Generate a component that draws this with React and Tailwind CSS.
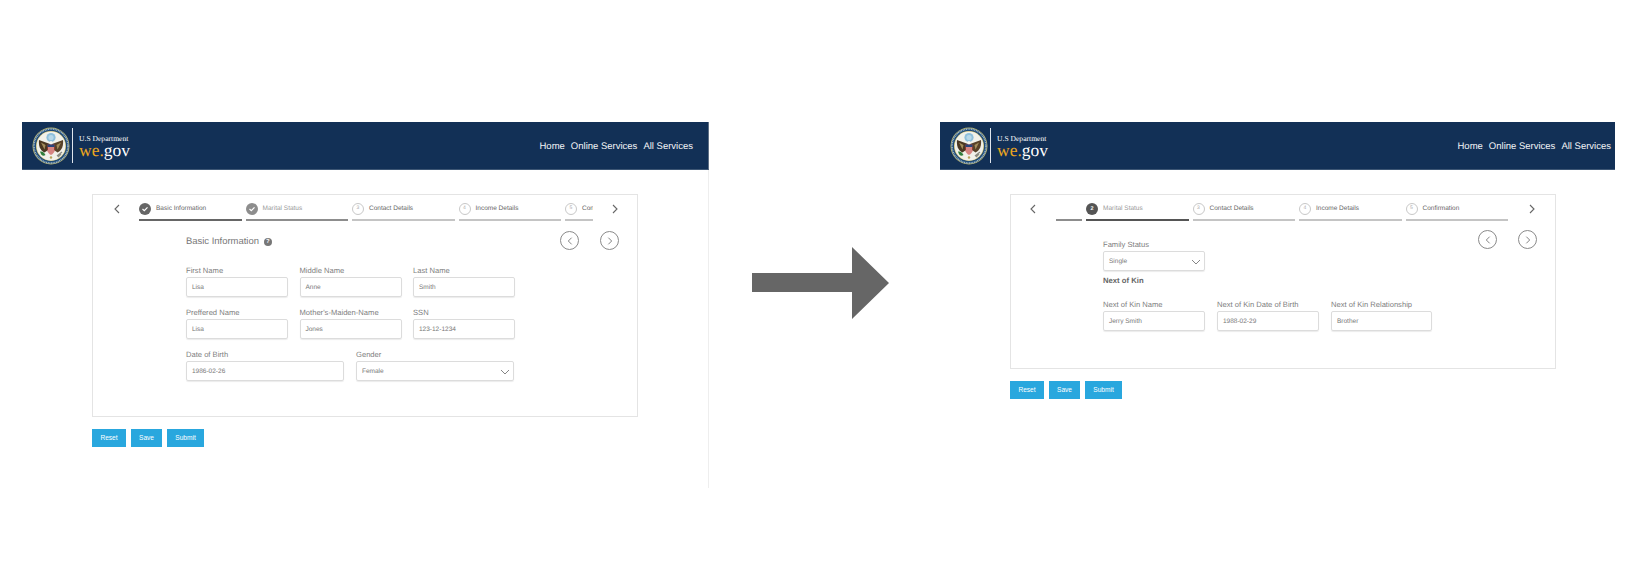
const SANS = "font-['Liberation_Sans',Arial,sans-serif]";

function Seal() {
  return (
    <svg width="38" height="38" viewBox="0 0 38 38" className="shrink-0">
      <circle cx="19" cy="19" r="18.5" fill="#b9b26a" />
      <circle cx="19" cy="19" r="17.6" fill="#1d4a78" />
      <circle cx="19" cy="19" r="17" fill="none" stroke="#9fb7c9" strokeWidth="1.6" strokeDasharray="1 0.7" />
      <circle cx="19" cy="19" r="15" fill="#d0bd68" />
      <circle cx="19" cy="19" r="14.4" fill="#f1f1ea" />
      <circle cx="19" cy="10.5" r="4.6" fill="#8fc0dc" />
      <circle cx="19" cy="10.5" r="2.6" fill="#b8d8e8" />
      <path d="M18 17 L7 13 C6.5 18 7.5 23 12.5 25.5 L16 23 Z" fill="#4a3722" />
      <path d="M20 17 L31 13 C31.5 18 30.5 23 25.5 25.5 L22 23 Z" fill="#574229" />
      <path d="M9 15.5 L13.5 18 L12.5 22.5 Z M29 15.5 L24.5 18 L25.5 22.5 Z" fill="#a38d5c" />
      <circle cx="19" cy="15.5" r="1.5" fill="#f7f7f0" />
      <path d="M15.5 17.5 H22.5 V23.5 C22.5 26 20.5 27 19 28 C17.5 27 15.5 26 15.5 23.5 Z" fill="#c23b3b" />
      <path d="M15.5 17.5 H22.5 V20 H15.5 Z" fill="#27457a" />
      <path d="M17 20 V27 M19 20 V28 M21 20 V27" stroke="#f4f4ee" strokeWidth="0.8" />
      <path d="M8 24.5 C10 24 12 25 13.5 28 C11 29.5 9 28.5 8 24.5 Z" fill="#2f7d3b" />
      <path d="M30 25 L25 29 M29 27 L26 30" stroke="#8b8b80" strokeWidth="1.4" />
      <circle cx="19" cy="30.5" r="1.2" fill="#b9a25a" />
    </svg>
  );
}

function Header({ width, edge = "" }) {
  return (
    <div className={`flex h-12 ${width} items-center justify-between bg-[#123056] pl-2.5 border-b border-[#3d5674] ${edge}`}>
      <div className="flex items-center">
        <Seal />
        <div className="ml-[2px] mr-[6px] h-[35px] w-px bg-[#dfe5ec]" />
        <div className="flex flex-col font-['Liberation_Serif',serif] text-white">
          <span className="mt-[1px] text-[7.6px] leading-[9px]">U.S Department</span>
          <span className="text-[17.5px] leading-[15px]">
            <span className="text-[#eba61e]">we.</span>gov
          </span>
        </div>
      </div>
      <nav className={`mt-[3px] flex gap-[6px] text-[9.5px] text-[#f2f4f7] ${SANS}`}>
        <span>Home</span>
        <span>Online Services</span>
        <span>All Services</span>
      </nav>
    </div>
  );
}

function Chevron({ dir, size = 12, color = "#666" }) {
  return (
    <svg width={size} height={size} viewBox="0 0 12 12" fill="none" className="shrink-0">
      <path d={dir === "left" ? "M8 2 L4 6 L8 10" : "M4 2 L8 6 L4 10"} stroke={color} strokeWidth="1.1" />
    </svg>
  );
}

function Badge({ kind, n }) {
  if (kind === "done" || kind === "doneLight")
    return (
      <span className={`flex h-3 w-3 shrink-0 items-center justify-center rounded-full ${kind === "done" ? "bg-[#666]" : "bg-[#8d8d8d]"}`}>
        <svg width="8" height="8" viewBox="0 0 8 8" fill="none"><path d="M1.5 4 L3.3 5.7 L6.5 2.3" stroke="#fff" strokeWidth="1.2" /></svg>
      </span>
    );
  if (kind === "active")
    return <span className="flex h-3 w-3 shrink-0 items-center justify-center rounded-full bg-[#555] text-[5.5px] font-bold text-white">{n}</span>;
  return <span className="flex h-3 w-3 shrink-0 items-center justify-center rounded-full border border-[#c8c8c8] text-[5px] text-[#aaa]">{n}</span>;
}

function Step({ label, kind, n, line, width = "w-[102.5px]", textColor = "text-[#666]" }) {
  return (
    <div className={`flex ${width} shrink-0 flex-col overflow-hidden`}>
      <div className="flex h-[20px] items-center gap-[5px] whitespace-nowrap">
        {kind && <Badge kind={kind} n={n} />}
        <span className={`text-[6.5px] ${textColor}`}>{label}</span>
      </div>
      <div className={`h-[2px] ${line}`} />
    </div>
  );
}

function NavCircle({ dir }) {
  return (
    <span className="flex h-[19px] w-[19px] items-center justify-center rounded-full border border-[#8a8a8a]">
      <Chevron dir={dir} size={10} color="#777" />
    </span>
  );
}

function Field({ label, value, className = "" }) {
  return (
    <label className={`flex flex-col ${className}`}>
      <span className="mt-[1px] text-[7.6px] leading-[10px] text-[#808080]">{label}</span>
      <span className="mt-[1px] flex h-5 items-center rounded-[2px] border border-[#dcdcdc] px-[5px] pt-[1px] text-[6.5px] text-[#777] shadow-[0_1px_1px_rgba(0,0,0,0.08)]">
        {value}
      </span>
    </label>
  );
}

function SelectField({ label, value, className = "" }) {
  return (
    <label className={`flex flex-col ${className}`}>
      <span className="mt-[1px] text-[7.6px] leading-[10px] text-[#808080]">{label}</span>
      <span className="mt-[1px] flex h-5 items-center justify-between rounded-[2px] border border-[#dcdcdc] pl-[5px] pr-[3px] pt-[1px] text-[6.5px] text-[#777] shadow-[0_1px_1px_rgba(0,0,0,0.08)]">
        {value}
        <svg width="10" height="8" viewBox="0 0 10 8" fill="none"><path d="M1 2 L5 6 L9 2" stroke="#777" strokeWidth="0.9" /></svg>
      </span>
    </label>
  );
}

function Buttons() {
  return (
    <div className="flex gap-[5px] text-[6.6px] text-white">
      <button className="h-[18px] w-[34px] bg-[#29a7de]">Reset</button>
      <button className="h-[18px] w-[31px] bg-[#29a7de]">Save</button>
      <button className="h-[18px] w-[37px] bg-[#29a7de]">Submit</button>
    </div>
  );
}

function LeftScreen() {
  return (
    <div className="flex h-[366px] w-[687px] shrink-0 flex-col border-r border-[#eeeeee]">
      <Header width="w-[687px]" edge="pr-[15px] border-r border-r-[#5f7085]" />
      <div className="ml-[70px] mt-6 flex h-[223px] w-[546px] flex-col border border-[#e4e4e4] pt-1">
        <div className="flex items-start">
          <div className="ml-[18px] mr-[16px] flex h-[20px] items-center"><Chevron dir="left" /></div>
          <div className="flex gap-1">
            <Step label="Basic Information" kind="done" line="bg-[#666]" />
            <Step label="Marital Status" kind="doneLight" line="bg-[#8d8d8d]" textColor="text-[#999]" />
            <Step label="Contact Details" n="3" kind="todo" line="bg-[#c4c4c4]" />
            <Step label="Income Details" n="4" kind="todo" line="bg-[#c4c4c4]" />
            <Step label="Confirmation" n="5" kind="todo" line="bg-[#c4c4c4]" width="w-[28px]" />
          </div>
          <div className="ml-[16px] flex h-[20px] items-center"><Chevron dir="right" /></div>
        </div>
        <div className="relative mt-3 pl-[93px]">
          <div className="flex h-[18px] items-center gap-[5px]">
            <span className="text-[9.45px] text-[#777]">Basic Information</span>
            <span className="flex h-[8px] w-[8px] items-center justify-center rounded-full bg-[#777] text-[6px] font-bold text-white">?</span>
          </div>
          <div className="absolute right-[18px] top-[-2px] flex gap-[21px]">
            <NavCircle dir="left" />
            <NavCircle dir="right" />
          </div>
          <div className="mt-[14px] grid w-[328px] grid-cols-[102px_102px_102px] gap-x-[11.5px] gap-y-[10px]">
            <Field label="First Name" value="Lisa" />
            <Field label="Middle Name" value="Anne" />
            <Field label="Last Name" value="Smith" />
            <Field label="Preffered Name" value="Lisa" />
            <Field label="Mother's-Maiden-Name" value="Jones" />
            <Field label="SSN" value="123-12-1234" />
          </div>
          <div className="mt-[10px] grid w-[328px] grid-cols-2 gap-x-[12px]">
            <Field label="Date of Birth" value="1986-02-26" />
            <SelectField label="Gender" value="Female" />
          </div>
        </div>
      </div>
      <div className="ml-[70px] mt-[12px]"><Buttons /></div>
    </div>
  );
}

function RightScreen() {
  return (
    <div className="flex w-[675px] shrink-0 flex-col">
      <Header width="w-[675px]" edge="pr-[4px]" />
      <div className="ml-[70px] mt-6 flex h-[175px] w-[546px] flex-col border border-[#e4e4e4] pt-1">
        <div className="flex items-start">
          <div className="ml-[16px] mr-[17px] flex h-[20px] items-center"><Chevron dir="left" /></div>
          <div className="flex gap-1">
            <Step line="bg-[#8d8d8d]" width="w-[26px]" />
            <Step label="Marital Status" kind="active" n="2" line="bg-[#555]" textColor="text-[#999]" />
            <Step label="Contact Details" n="3" kind="todo" line="bg-[#c4c4c4]" />
            <Step label="Income Details" n="4" kind="todo" line="bg-[#c4c4c4]" />
            <Step label="Confirmation" n="5" kind="todo" line="bg-[#c4c4c4]" />
          </div>
          <div className="ml-[18px] flex h-[20px] items-center"><Chevron dir="right" /></div>
        </div>
        <div className="relative mt-[9px] pl-[92px]">
          <div className="absolute right-[18px] top-0 flex gap-[21px]">
            <NavCircle dir="left" />
            <NavCircle dir="right" />
          </div>
          <SelectField label="Family Status" value="Single" className="w-[102px] pt-[9px]" />
          <div className="mt-[5px] text-[7.7px] font-bold leading-[10px] text-[#666]">Next of Kin</div>
          <div className="mt-[13px] grid w-[329px] grid-cols-[102px_102px_101px] gap-x-[12px]">
            <Field label="Next of Kin Name" value="Jerry Smith" />
            <Field label="Next of Kin Date of Birth" value="1988-02-29" />
            <Field label="Next of Kin Relationship" value="Brother" />
          </div>
        </div>
      </div>
      <div className="ml-[70px] mt-[12px]"><Buttons /></div>
    </div>
  );
}

function Arrow() {
  return (
    <svg width="138" height="72" viewBox="0 0 138 72" className="mt-[125px] shrink-0">
      <path d="M0 26 H100 V0 L137 36 L100 72 V45 H0 Z" fill="#666666" />
    </svg>
  );
}

export default function App() {
  return (
    <div className={`flex h-[588px] w-[1648px] items-start bg-white pl-[22px] pt-[122px] [text-rendering:geometricPrecision] ${SANS}`}>
      <LeftScreen />
      <div className="ml-[43px] mr-[50px] flex"><Arrow /></div>
      <RightScreen />
    </div>
  );
}
